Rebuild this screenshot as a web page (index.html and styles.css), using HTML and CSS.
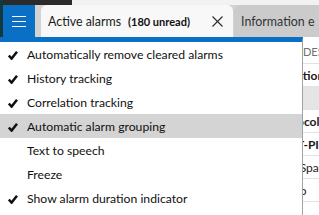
FILE: index.html
```html
<!DOCTYPE html>
<html>
<head>
<meta charset="utf-8">
<link rel="stylesheet" href="styles.css">
</head>
<body>
<div class="app">
  <header class="header">
    <div class="edge"></div>
    <div class="header-main">
      <div class="topstrip"><div class="ts-dark"></div><div class="ts-light"></div></div>
      <div class="tabbar">
        <div class="menu-btn">
          <svg width="14" height="12" viewBox="0 0 14 12"><path d="M0 0.5H14M0 5.5H14M0 10.5H14" stroke="#fff" stroke-width="1.1" fill="none"/></svg>
        </div>
        <div class="tab tab-active">
          <span class="tab-title">Active alarms</span>
          <span class="tab-count">(180 unread)</span>
          <svg class="tab-close" width="11" height="11" viewBox="0 0 11 11"><path d="M0.5 0.5L10.5 10.5M10.5 0.5L0.5 10.5" stroke="#2a2a2a" stroke-width="1.1" fill="none"/></svg>
        </div>
        <div class="tab tab-other"><span class="tab-title">Information e</span></div>
      </div>
    </div>
  </header>
  <div class="content">
    <div class="grid">
      <div class="grow head"><div class="gl"></div><div class="gc">DES</div></div>
      <div class="grow"><div class="gl"></div><div class="gc b">ction</div></div>
      <div class="grow shade"><div class="gl"></div><div class="gc b"></div></div>
      <div class="grow"><div class="gl"></div><div class="gc b">ocol</div></div>
      <div class="grow"><div class="gl"></div><div class="gc b">T-PI</div></div>
      <div class="grow"><div class="gl"></div><div class="gc">,Spa</div></div>
      <div class="grow"><div class="gl"></div><div class="gc">lo</div></div>
      <div class="grow"><div class="gl"></div><div class="gc"></div></div>
    </div>
    <ul class="menu">
      <li class="item"><span class="chk"><svg width="10" height="9" viewBox="0 0 10 9"><path d="M0.8 4.6L3.6 7.6L9 0.8" stroke="#111" stroke-width="2.5" fill="none"/></svg></span>Automatically remove cleared alarms</li>
      <li class="item"><span class="chk"><svg width="10" height="9" viewBox="0 0 10 9"><path d="M0.8 4.6L3.6 7.6L9 0.8" stroke="#111" stroke-width="2.5" fill="none"/></svg></span>History tracking</li>
      <li class="item"><span class="chk"><svg width="10" height="9" viewBox="0 0 10 9"><path d="M0.8 4.6L3.6 7.6L9 0.8" stroke="#111" stroke-width="2.5" fill="none"/></svg></span>Correlation tracking</li>
      <li class="item hover"><span class="chk"><svg width="10" height="9" viewBox="0 0 10 9"><path d="M0.8 4.6L3.6 7.6L9 0.8" stroke="#111" stroke-width="2.5" fill="none"/></svg></span>Automatic alarm grouping</li>
      <li class="item"><span class="chk"></span>Text to speech</li>
      <li class="item"><span class="chk"></span>Freeze</li>
      <li class="item"><span class="chk"><svg width="10" height="9" viewBox="0 0 10 9"><path d="M0.8 4.6L3.6 7.6L9 0.8" stroke="#111" stroke-width="2.5" fill="none"/></svg></span>Show alarm duration indicator</li>
    </ul>
  </div>
</div>
</body>
</html>
```
FILE: styles.css
```css
* { box-sizing: border-box; }
html, body { margin: 0; padding: 0; }
body {
  width: 319px;
  height: 215px;
  overflow: hidden;
  background: #ffffff;
  font-family: "Lato", "Liberation Sans", sans-serif;
  color: #111;
}
.app { width: 319px; height: 215px; display: flex; flex-direction: column; overflow: hidden; }
.header { display: flex; height: 37px; flex: none; }
.edge { width: 3px; background: #103a3e; }
.header-main { flex: 1; display: flex; flex-direction: column; }
.topstrip { height: 5px; display: flex; }
.ts-dark { width: 69px; background: #2b2b2b; }
.ts-light { flex: 1; background: #f2f2f2; }
.tabbar { flex: 1; display: flex; background: #d3d3d3; }
.menu-btn {
  width: 32px;
  flex: none;
  background: #0a70c6;
  display: flex;
  align-items: center;
  justify-content: center;
  padding-top: 2px;
}
.tab {
  display: flex;
  align-items: center;
  white-space: nowrap;
  overflow: hidden;
  border-radius: 6px 6px 0 0;
  font-size: 12.4px;
}
.tab-active {
  width: 192px;
  flex: none;
  margin-left: 6px;
  background: #f8f8f8;
  padding-left: 7px;
  padding-right: 10px;
}
.tab-title { color: #1a1a1a; }
.tab-count { font-weight: 700; font-size: 11px; margin-left: 7px; color: #111; }
.tab-close { margin-left: auto; }
.tab-other {
  flex: 1;
  margin-left: 1px;
  background: #cbcbcb;
  padding-left: 7px;
  border-radius: 6px 0 0 0;
}
.tab-other .tab-title { color: #333; }
.content { flex: 1; position: relative; }
.grid { display: flex; flex-direction: column; }
.grow { display: flex; height: 23px; border-bottom: 1px solid #e2e2e2; }
.grow.head { height: 27px; }
.grow.shade { background: #e5e5e5; }
.gl { width: 297px; flex: none; }
.gc {
  flex: 1;
  white-space: nowrap;
  overflow: hidden;
  font-size: 12px;
  display: flex;
  align-items: center;
  color: #1a1a1a;
}
.grow.head .gc { color: #707070; font-size: 11px; padding-left: 6px; padding-top: 2px; }
.gc.b { font-weight: 700; }
.menu {
  position: absolute;
  top: 0;
  left: 0;
  width: 303px;
  bottom: 0;
  margin: 0;
  padding: 0;
  list-style: none;
  background: #ffffff;
  border-top: 5px solid #0a70c6;
  border-right: 1px solid #a3a3a3;
}
.item {
  height: 24px;
  display: flex;
  align-items: center;
  font-size: 12.2px;
  white-space: nowrap;
  color: #111;
}
.item.hover { background: #d4d4d4; }
.chk { width: 27px; flex: none; display: flex; padding-left: 8px; padding-top: 3px; }
```
